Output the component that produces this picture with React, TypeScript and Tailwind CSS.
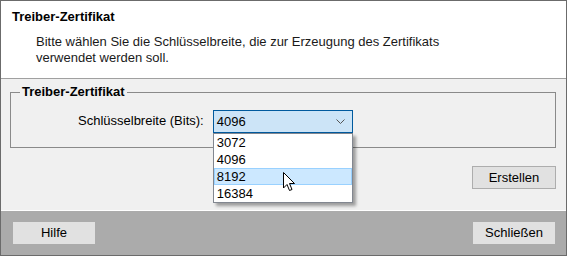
import React from 'react';

const options = ['3072', '4096', '8192', '16384'];

const Cursor: React.FC = () => (
  <svg className="absolute left-[70px] top-[62px]" width="13" height="20" viewBox="0 0 13 20">
    <path
      d="M0.5 0.5 L0.5 16 L4 12.5 L6.5 18.5 L9 17.5 L6.5 11.5 L11.5 11.5 Z"
      fill="#fff"
      stroke="#000"
      strokeWidth="1"
      strokeLinejoin="miter"
    />
  </svg>
);

export default function App() {
  return (
    <div className="w-[567px] h-[256px] border border-[#6b6b6b] flex flex-col font-['Liberation_Sans',Arial,sans-serif] text-[13px] leading-[16px] text-black bg-[#f0f0f0]">
      {/* header */}
      <div className="h-[78px] bg-white border-b border-[#a0a0a0] pt-[8px] pl-[11px]">
        <div className="font-bold">Treiber-Zertifikat</div>
        <p className="mt-[9px] ml-[24px] text-[#1a1a1a]">
          Bitte wählen Sie die Schlüsselbreite, die zur Erzeugung des Zertifikats
          <br />
          verwendet werden soll.
        </p>
      </div>

      {/* body */}
      <div className="h-[132px] border-b border-white pt-[5px] pl-[9px] pr-[10px] flex flex-col">
        <fieldset className="border border-[#8a8a8a] p-0 m-0">
          <legend className="ml-[9px] px-[2px] font-bold">Treiber-Zertifikat</legend>
          <div className="h-[47px] pt-[10px] pl-[67px] flex items-start gap-[9px]">
            <span className="mt-[3px]">Schlüsselbreite (Bits):</span>
            <div className="relative z-10">
              <div className="w-[140px] h-[23px] border border-[#005a9e] bg-[#cce4f7] flex items-center justify-between pl-[3px] pr-[7px]">
                <span>4096</span>
                <svg width="9" height="5" viewBox="0 0 9 5">
                  <path d="M0.5 0.5 L4.5 4.5 L8.5 0.5" fill="none" stroke="#555" strokeWidth="1" />
                </svg>
              </div>
              <div className="absolute left-0 top-[23px] w-[140px] bg-white border border-[#828790] shadow-[3px_3px_3px_rgba(0,0,0,0.35)]">
                {options.map((o) => (
                  <div
                    key={o}
                    className={
                      o === '8192'
                        ? 'h-[17px] pl-[2px] bg-[#cce8ff] border border-[#99d1ff] leading-[15px]'
                        : 'h-[17px] pl-[3px] leading-[17px]'
                    }
                  >
                    {o}
                  </div>
                ))}
              </div>
              <Cursor />
            </div>
          </div>
        </fieldset>
        <div className="flex justify-end mt-[18px]">
          <button className="w-[84px] h-[23px] bg-[#e1e1e1] border border-[#adadad] text-center">
            Erstellen
          </button>
        </div>
      </div>

      {/* footer */}
      <div className="flex-1 bg-[#ababab] flex items-center justify-between pl-[12px] pr-[11px]">
        <button className="w-[82px] h-[22px] bg-[#e1e1e1] text-center">Hilfe</button>
        <button className="w-[82px] h-[22px] bg-[#e1e1e1] text-center">Schließen</button>
      </div>
    </div>
  );
}
